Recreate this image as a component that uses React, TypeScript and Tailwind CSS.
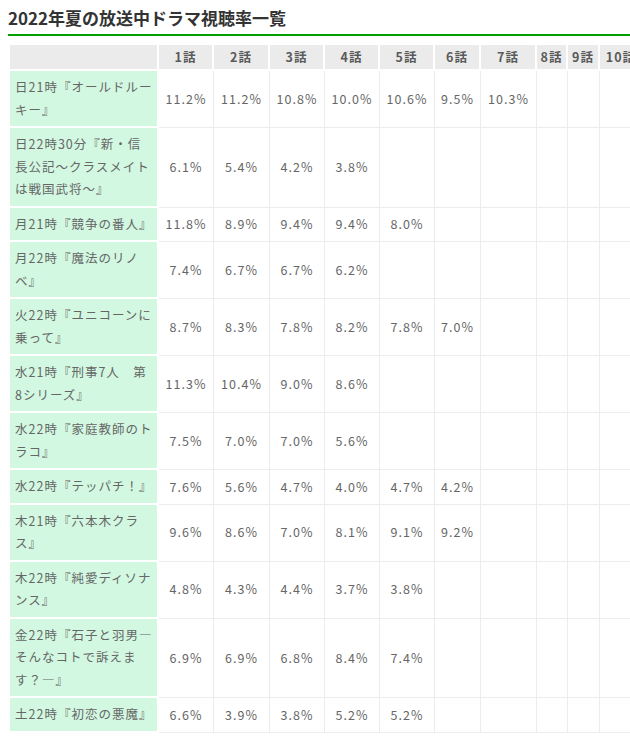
const episodes = ["1話", "2話", "3話", "4話", "5話", "6話", "7話", "8話", "9話", "10話"];

const colWidths = [149, 55, 56, 55, 55, 55, 46, 56, 31, 32, 44];

const dramas: { title: string[]; rates: string[] }[] = [
  { title: ["日21時『オールドルー", "キー』"], rates: ["11.2", "11.2", "10.8", "10.0", "10.6", "9.5", "10.3"] },
  { title: ["日22時30分『新・信", "長公記～クラスメイト", "は戦国武将～』"], rates: ["6.1", "5.4", "4.2", "3.8"] },
  { title: ["月21時『競争の番人』"], rates: ["11.8", "8.9", "9.4", "9.4", "8.0"] },
  { title: ["月22時『魔法のリノ", "ベ』"], rates: ["7.4", "6.7", "6.7", "6.2"] },
  { title: ["火22時『ユニコーンに", "乗って』"], rates: ["8.7", "8.3", "7.8", "8.2", "7.8", "7.0"] },
  { title: ["水21時『刑事7人　第", "8シリーズ』"], rates: ["11.3", "10.4", "9.0", "8.6"] },
  { title: ["水22時『家庭教師のト", "ラコ』"], rates: ["7.5", "7.0", "7.0", "5.6"] },
  { title: ["水22時『テッパチ！』"], rates: ["7.6", "5.6", "4.7", "4.0", "4.7", "4.2"] },
  { title: ["木21時『六本木クラ", "ス』"], rates: ["9.6", "8.6", "7.0", "8.1", "9.1", "9.2"] },
  { title: ["木22時『純愛ディソナ", "ンス』"], rates: ["4.8", "4.3", "4.4", "3.7", "3.8"] },
  { title: ["金22時『石子と羽男―", "そんなコトで訴えま", "す？―』"], rates: ["6.9", "6.9", "6.8", "8.4", "7.4"] },
  { title: ["土22時『初恋の悪魔』"], rates: ["6.6", "3.9", "3.8", "5.2", "5.2"] },
];

export default function App() {
  return (
    <div className="min-h-[738px] overflow-hidden bg-white pl-[8px] font-['Noto_Sans_CJK_JP','Noto_Sans',sans-serif]">
      <h2 className="border-b-2 border-[#00a000] pt-[5px] pb-[3px] text-[17px] leading-[26px] font-bold text-[#333]">
        2022年夏の放送中ドラマ視聴率一覧
      </h2>

      <div className="mt-[9px] ml-[2px] overflow-hidden">
        <table className="table-fixed border-separate border-spacing-0 text-[12.5px] tracking-[1px] text-[#666]" style={{ width: 634 }}>
          <colgroup>
            {colWidths.map((w, i) => (
              <col key={i} style={{ width: w }} />
            ))}
          </colgroup>
          <thead>
            <tr>
              <th className="border-r-2 border-b-2 border-white bg-[#ebebeb] py-[1px] leading-[22px]" />
              {episodes.map((ep) => (
                <th
                  key={ep}
                  className="whitespace-nowrap border-r-2 border-b-2 border-white bg-[#ebebeb] py-[1px] text-center font-bold leading-[22px] text-[#5a5a5a]"
                >
                  {ep}
                </th>
              ))}
            </tr>
          </thead>
          <tbody>
            {dramas.map((d, i) => (
              <tr key={i}>
                <td className="border-r-2 border-b-2 border-white bg-[#d2f8e1] px-[5px] py-[5px] text-left align-middle leading-[22.5px]">
                  {d.title.map((line, j) => (
                    <span key={j} className="block whitespace-nowrap">
                      {line}
                    </span>
                  ))}
                </td>
                {episodes.map((_, k) => (
                  <td
                    key={k}
                    className="whitespace-nowrap border-r border-b border-[#ececec] px-0 py-[5px] text-center align-middle leading-[22.5px]"
                  >
                    {d.rates[k] ? `${d.rates[k]}%` : ""}
                  </td>
                ))}
              </tr>
            ))}
          </tbody>
        </table>
      </div>
    </div>
  );
}
